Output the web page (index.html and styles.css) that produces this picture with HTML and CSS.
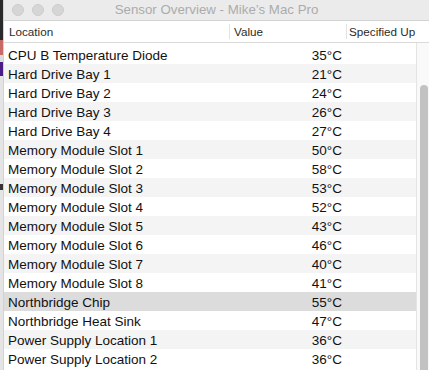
FILE: index.html
```html
<!DOCTYPE html>
<html>
<head>
<meta charset="utf-8">
<link rel="stylesheet" href="styles.css">
</head>
<body>
<div class="screen">
  <div class="desk">
    <div class="seg seg-dark"></div>
    <div class="seg seg-red"></div>
    <div class="seg seg-gap"></div>
    <div class="seg seg-purple"></div>
    <div class="seg seg-light"></div>
    <div class="seg seg-dot"></div>
    <div class="seg seg-rest"></div>
  </div>
  <div class="window">
    <div class="titlebar">
      <div class="lights"><span class="light"></span><span class="light"></span><span class="light"></span></div>
      <div class="title">Sensor Overview - Mike’s Mac Pro</div>
      <div></div>
    </div>
    <div class="thead">
      <div class="th th-loc">Location</div>
      <div class="th th-val">Value</div>
      <div class="th th-spec">Specified Up</div>
      <div class="th th-fill"></div>
    </div>
    <div class="body">
      <div class="rows">
        <div class="row"><span class="loc">CPU B Temperature Diode</span><span class="val">35°C</span><span></span></div>
        <div class="row"><span class="loc">Hard Drive Bay 1</span><span class="val">21°C</span><span></span></div>
        <div class="row"><span class="loc">Hard Drive Bay 2</span><span class="val">24°C</span><span></span></div>
        <div class="row"><span class="loc">Hard Drive Bay 3</span><span class="val">26°C</span><span></span></div>
        <div class="row"><span class="loc">Hard Drive Bay 4</span><span class="val">27°C</span><span></span></div>
        <div class="row"><span class="loc">Memory Module Slot 1</span><span class="val">50°C</span><span></span></div>
        <div class="row"><span class="loc">Memory Module Slot 2</span><span class="val">58°C</span><span></span></div>
        <div class="row"><span class="loc">Memory Module Slot 3</span><span class="val">53°C</span><span></span></div>
        <div class="row"><span class="loc">Memory Module Slot 4</span><span class="val">52°C</span><span></span></div>
        <div class="row"><span class="loc">Memory Module Slot 5</span><span class="val">43°C</span><span></span></div>
        <div class="row"><span class="loc">Memory Module Slot 6</span><span class="val">46°C</span><span></span></div>
        <div class="row"><span class="loc">Memory Module Slot 7</span><span class="val">40°C</span><span></span></div>
        <div class="row"><span class="loc">Memory Module Slot 8</span><span class="val">41°C</span><span></span></div>
        <div class="row selected"><span class="loc">Northbridge Chip</span><span class="val">55°C</span><span></span></div>
        <div class="row"><span class="loc">Northbridge Heat Sink</span><span class="val">47°C</span><span></span></div>
        <div class="row"><span class="loc">Power Supply Location 1</span><span class="val">36°C</span><span></span></div>
        <div class="row"><span class="loc">Power Supply Location 2</span><span class="val">36°C</span><span></span></div>
      </div>
      <div class="scrollbar"><div class="thumb"></div></div>
    </div>
  </div>
</div>
</body>
</html>
```

FILE: styles.css
```css
html, body {
  margin: 0;
  padding: 0;
  width: 429px;
  height: 370px;
  overflow: hidden;
  background: #e6e6e6;
}
.screen {
  display: flex;
  width: 429px;
  height: 370px;
  overflow: hidden;
  font-family: "Liberation Sans", Arial, sans-serif;
}
.desk {
  width: 3px;
  flex: none;
  display: flex;
  flex-direction: column;
}
.seg { width: 3px; flex: none; }
.seg-dark { height: 40px; background: #2a2a2a; }
.seg-red { height: 15px; background: #c86a66; }
.seg-gap { height: 7px; background: #dcdcdc; }
.seg-purple { height: 14px; background: #4a1c86; }
.seg-light { height: 108px; background: #e4e4e4; }
.seg-dot { height: 6px; background: #333; }
.seg-rest { flex: 1; background: #e4e4e4; }

.window {
  flex: 1;
  display: flex;
  flex-direction: column;
  border-left: 1px solid #d2d2d2;
  background: #fff;
  min-width: 0;
}
.titlebar {
  height: 20px;
  flex: none;
  background: #ebebeb;
  border-bottom: 1px solid #d4d4d4;
  display: grid;
  grid-template-columns: 1fr auto 1fr;
  align-items: center;
}
.lights {
  display: flex;
  gap: 8px;
  padding-left: 8px;
  padding-bottom: 1px;
}
.light {
  width: 12px;
  height: 12px;
  box-sizing: border-box;
  border-radius: 50%;
  background: #d6d6d6;
  border: 1px solid #cdcdcd;
}
.title {
  font-size: 13.3px;
  color: #ababab;
  white-space: nowrap;
  padding-bottom: 1px;
}
.thead {
  height: 21px;
  flex: none;
  display: grid;
  grid-template-columns: 225px 117px 70px 1fr;
  border-bottom: 1px solid #dadada;
  background: #fff;
  align-items: center;
}
.th {
  font-size: 11.7px;
  color: #2b2b2b;
  height: 15px;
  line-height: 15px;
  white-space: nowrap;
  overflow: hidden;
}
.th-loc { padding-left: 5px; }
.th-val, .th-spec { border-left: 1px solid #e2e2e2; padding-left: 4px; }
.th-spec { padding-left: 2px; }
.body {
  flex: 1;
  display: flex;
  min-height: 0;
  padding-top: 2px;
}
.rows {
  width: 412px;
  flex: none;
  display: flex;
  flex-direction: column;
}
.row {
  height: 19px;
  box-sizing: border-box;
  padding-top: 3px;
  flex: none;
  display: grid;
  grid-template-columns: 225px 117px 70px;
  align-items: center;
  font-size: 13.5px;
  line-height: 16px;
  color: #111;
  white-space: nowrap;
}
.row:nth-child(even) { background: #f4f4f5; }
.row.selected { background: #dcdcdc; }
.loc { padding-left: 4px; }
.val { text-align: right; padding-right: 4px; }
.scrollbar {
  flex: 1;
  margin-top: -2px;
  background: #f9f9f9;
  border-left: 1px solid #e4e4e4;
  padding: 42px 1px 0 3px;
}
.thumb {
  height: 300px;
  width: 8px;
  background: #c2c2c2;
  border-radius: 4px 4px 0 0;
}
```
